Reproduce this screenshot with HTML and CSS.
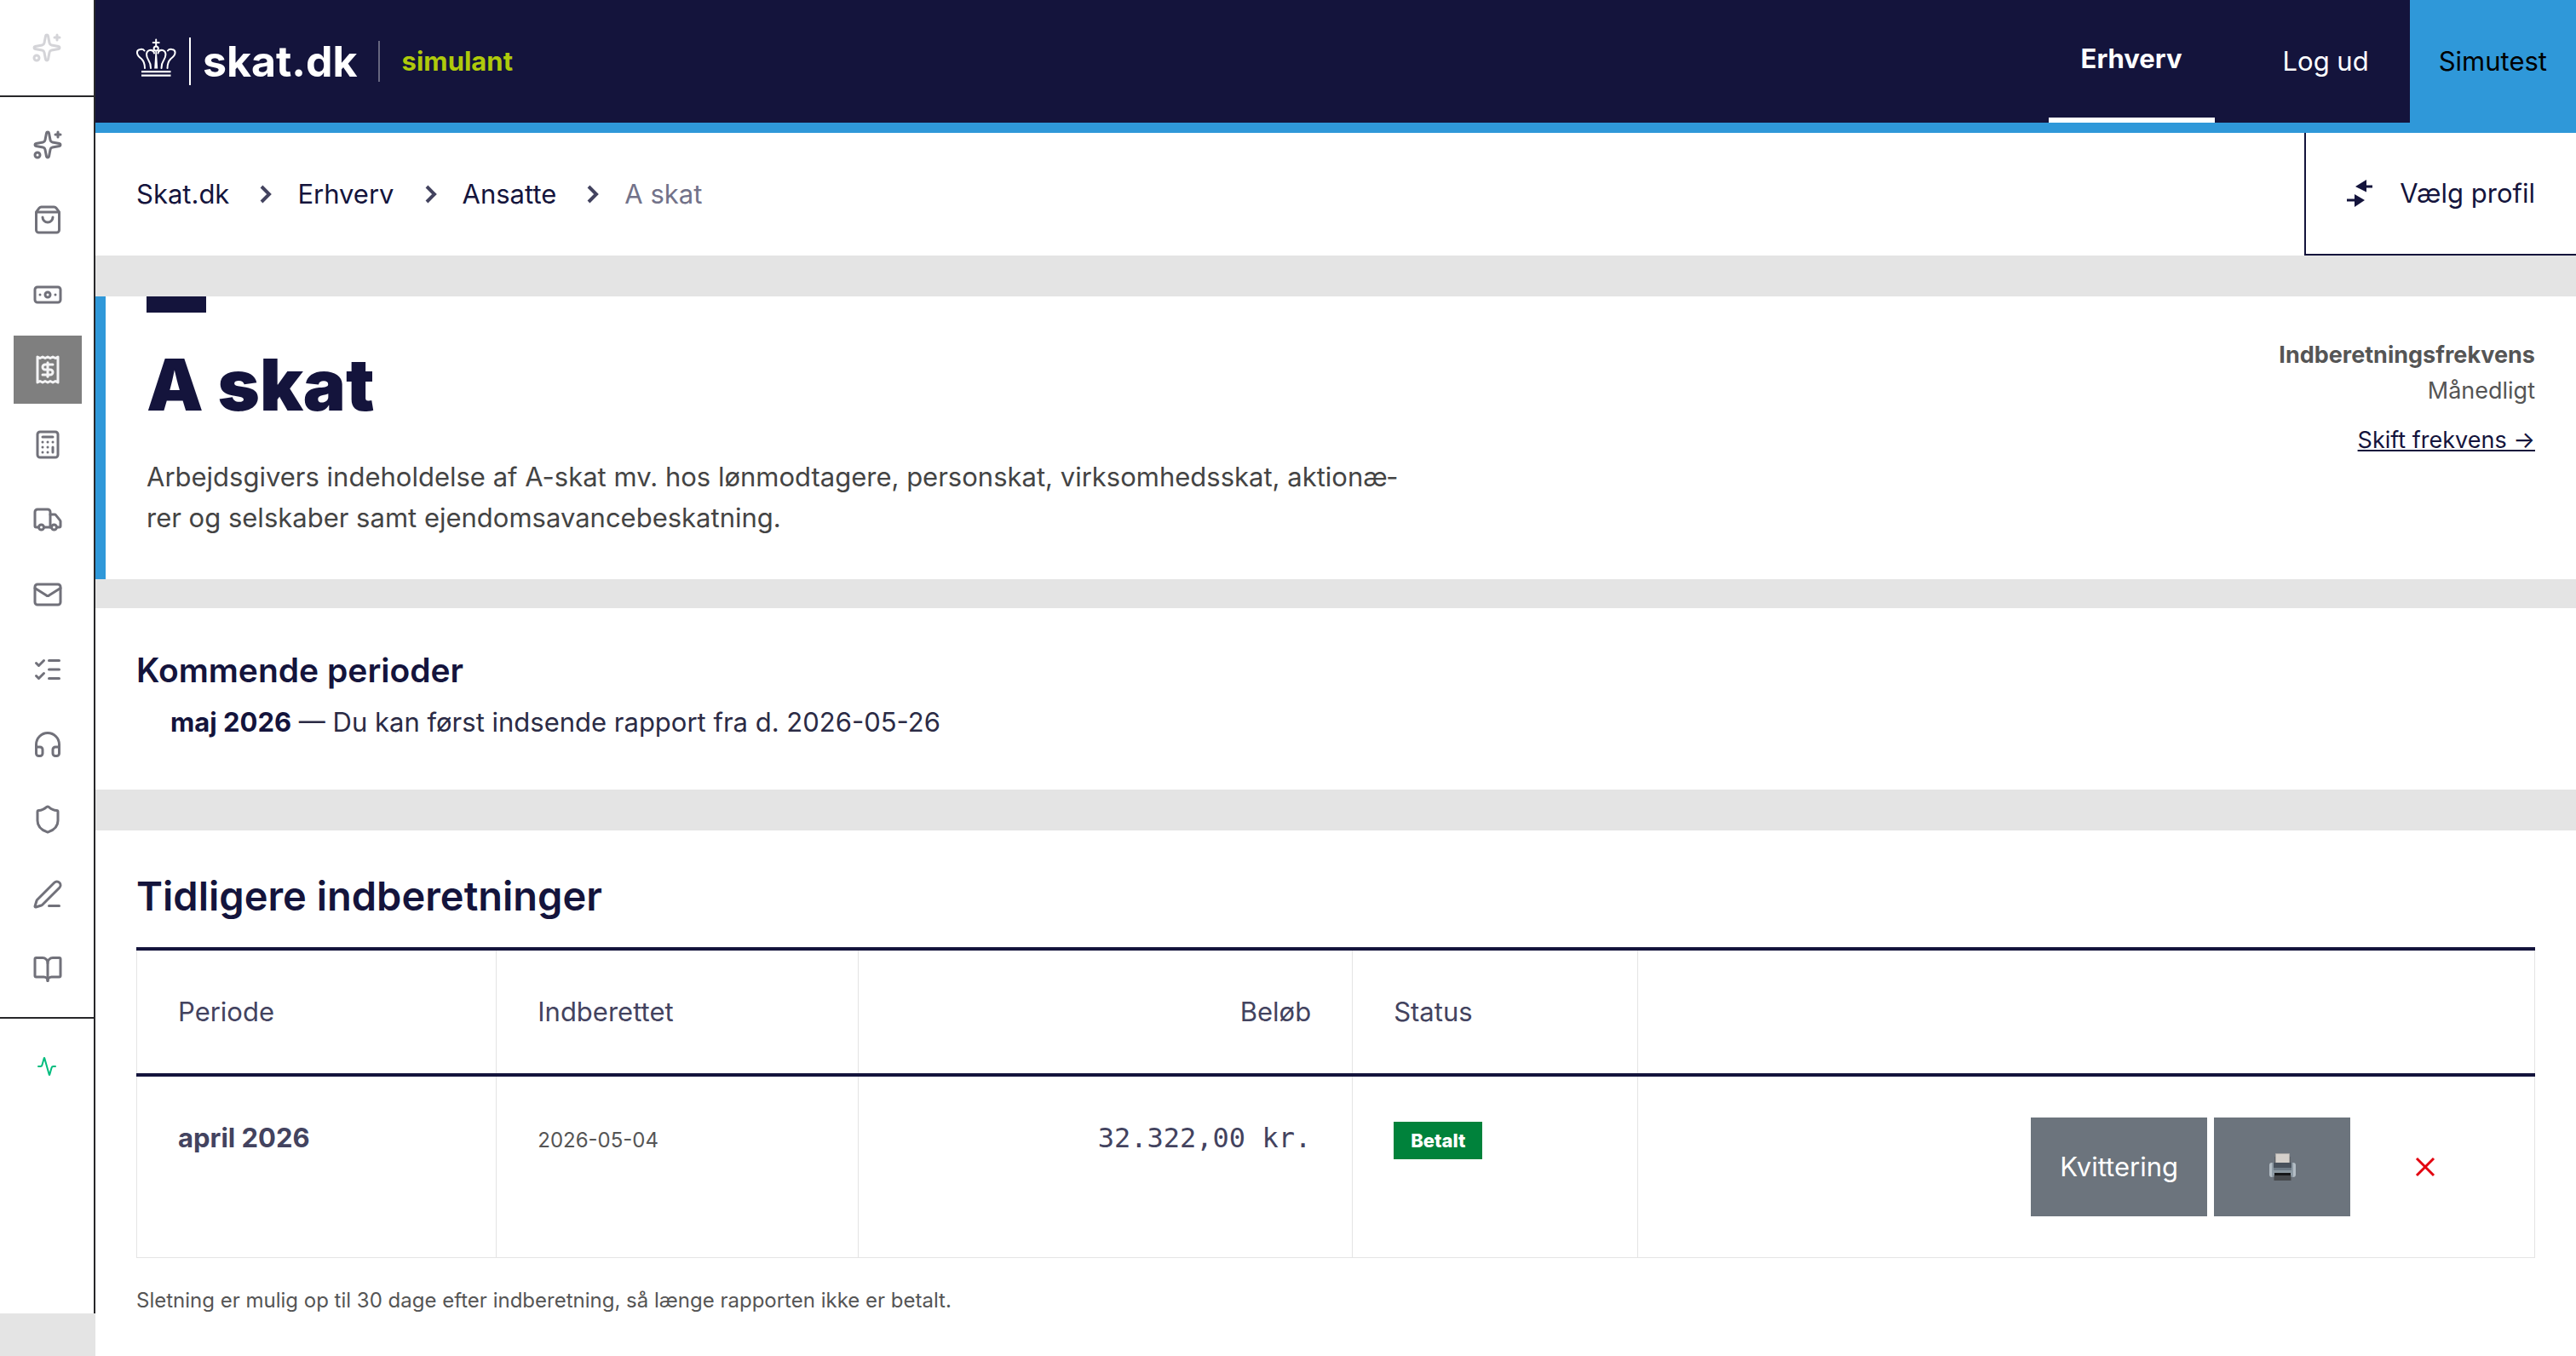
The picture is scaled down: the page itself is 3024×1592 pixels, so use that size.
FILE: index.html
```html
<!DOCTYPE html>
<html lang="da">
<head>
	<meta charset="utf-8">
	<title>A skat - skat.dk simulant</title>
	<meta name="viewport" content="width=device-width, initial-scale=1.0">
	<link rel="stylesheet" href="styles.css">
</head>
<body>
	<aside class="sidebar">
		<div class="sidebar-top">
			<svg class="icon" viewBox="0 0 24 24"><path d="M11.017 2.814a1 1 0 0 1 1.966 0l1.051 5.558a2 2 0 0 0 1.594 1.594l5.558 1.051a1 1 0 0 1 0 1.966l-5.558 1.051a2 2 0 0 0-1.594 1.594l-1.051 5.558a1 1 0 0 1-1.966 0l-1.051-5.558a2 2 0 0 0-1.594-1.594l-5.558-1.051a1 1 0 0 1 0-1.966l5.558-1.051a2 2 0 0 0 1.594-1.594z"/><path d="M20 2v4"/><path d="M22 4h-4"/><circle cx="4" cy="20" r="2"/></svg>
		</div>
		<nav class="sidebar-nav">
			<a href="#" aria-label="Assistent"><svg class="icon" viewBox="0 0 24 24"><path d="M11.017 2.814a1 1 0 0 1 1.966 0l1.051 5.558a2 2 0 0 0 1.594 1.594l5.558 1.051a1 1 0 0 1 0 1.966l-5.558 1.051a2 2 0 0 0-1.594 1.594l-1.051 5.558a1 1 0 0 1-1.966 0l-1.051-5.558a2 2 0 0 0-1.594-1.594l-5.558-1.051a1 1 0 0 1 0-1.966l5.558-1.051a2 2 0 0 0 1.594-1.594z"/><path d="M20 2v4"/><path d="M22 4h-4"/><circle cx="4" cy="20" r="2"/></svg></a>
			<a href="#" aria-label="Butik"><svg class="icon" viewBox="0 0 24 24"><path d="M16 10a4 4 0 0 1-8 0"/><path d="M3.103 6.034h17.794"/><path d="M3.4 5.467a2 2 0 0 0-.4 1.2V20a2 2 0 0 0 2 2h14a2 2 0 0 0 2-2V6.667a2 2 0 0 0-.4-1.2l-2-2.667A2 2 0 0 0 17 2H7a2 2 0 0 0-1.6.8z"/></svg></a>
			<a href="#" aria-label="Bank"><svg class="icon" viewBox="0 0 24 24"><rect width="20" height="12" x="2" y="6" rx="2"/><circle cx="12" cy="12" r="2"/><path d="M6 12h.01M18 12h.01"/></svg></a>
			<a href="#" aria-label="Skat" class="active"><svg class="icon" viewBox="0 0 24 24"><path d="M4 2v20l2-1 2 1 2-1 2 1 2-1 2 1 2-1 2 1V2l-2 1-2-1-2 1-2-1-2 1-2-1-2 1Z"/><path d="M16 8h-6a2 2 0 1 0 0 4h4a2 2 0 1 1 0 4H8"/><path d="M12 17.5v-11"/></svg></a>
			<a href="#" aria-label="Regnskab"><svg class="icon" viewBox="0 0 24 24"><rect width="16" height="20" x="4" y="2" rx="2"/><path d="M8 6h8M16 14v4M16 10h.01M12 10h.01M8 10h.01M12 14h.01M8 14h.01M12 18h.01M8 18h.01"/></svg></a>
			<a href="#" aria-label="Levering"><svg class="icon" viewBox="0 0 24 24"><path d="M14 18V6a2 2 0 0 0-2-2H4a2 2 0 0 0-2 2v11a1 1 0 0 0 1 1h2"/><path d="M15 18H9"/><path d="M19 18h2a1 1 0 0 0 1-1v-3.65a1 1 0 0 0-.22-.624l-3.48-4.35A1 1 0 0 0 17.52 8H14"/><circle cx="17" cy="18" r="2"/><circle cx="7" cy="18" r="2"/></svg></a>
			<a href="#" aria-label="Post"><svg class="icon" viewBox="0 0 24 24"><path d="m22 7-8.991 5.727a2 2 0 0 1-2.009 0L2 7"/><rect x="2" y="4" width="20" height="16" rx="2"/></svg></a>
			<a href="#" aria-label="Opgaver"><svg class="icon" viewBox="0 0 24 24"><path d="m3 17 2 2 4-4"/><path d="m3 7 2 2 4-4"/><path d="M13 5h8M13 12h8M13 19h8"/></svg></a>
			<a href="#" aria-label="Support"><svg class="icon" viewBox="0 0 24 24"><path d="M3 14h3a2 2 0 0 1 2 2v3a2 2 0 0 1-2 2H5a2 2 0 0 1-2-2v-7a9 9 0 0 1 18 0v7a2 2 0 0 1-2 2h-1a2 2 0 0 1-2-2v-3a2 2 0 0 1 2-2h3"/></svg></a>
			<a href="#" aria-label="Sikkerhed"><svg class="icon" viewBox="0 0 24 24"><path d="M20 13c0 5-3.5 7.5-7.66 8.95a1 1 0 0 1-.67-.01C7.5 20.5 4 18 4 13V6a1 1 0 0 1 1-1c2 0 4.5-1.2 6.24-2.72a1.17 1.17 0 0 1 1.52 0C14.51 3.81 17 5 19 5a1 1 0 0 1 1 1z"/></svg></a>
			<a href="#" aria-label="Noter"><svg class="icon" viewBox="0 0 24 24"><path d="M13 21h8"/><path d="M21.174 6.812a1 1 0 0 0-3.986-3.987L3.842 16.174a2 2 0 0 0-.5.83l-1.321 4.352a.5.5 0 0 0 .623.622l4.353-1.32a2 2 0 0 0 .83-.497z"/></svg></a>
			<a href="#" aria-label="Vejledning"><svg class="icon" viewBox="0 0 24 24"><path d="M12 7v14"/><path d="M3 18a1 1 0 0 1-1-1V4a1 1 0 0 1 1-1h5a4 4 0 0 1 4 4 4 4 0 0 1 4-4h5a1 1 0 0 1 1 1v13a1 1 0 0 1-1 1h-6a3 3 0 0 0-3 3 3 3 0 0 0-3-3z"/></svg></a>
		</nav>
		<div class="sidebar-status">
			<svg class="icon small" viewBox="0 0 24 24"><path d="M22 12h-2.48a2 2 0 0 0-1.93 1.46l-2.35 8.36a.25.25 0 0 1-.48 0L9.24 2.18a.25.25 0 0 0-.48 0l-2.35 8.36A2 2 0 0 1 4.49 12H2"/></svg>
		</div>
	</aside>

	<div class="page">
		<header class="header">
			<a href="#" class="logo">
				<svg class="crown" viewBox="0 0 50 46">
					<path class="line" d="M23.200 1.500v7M19.700 5h7M10 35c0-5-1-8-4-11-7-5-6-10.500-1.500-11 2-.5 4 0 5 1.500M36.500 35c0-5 1-8 4-11 7-5 6-10.500 1.500-11-2-.5-4 0-5 1.500M17 35c0-5-1-7-3-10-3-5-2.500-10 1.500-11 3-.5 5 1 5.500 3.500M29.500 35c0-5 1-7 3-10 3-5 2.500-10-1.500-11-3-.5-5 1-5.500 3.500"/>
					<circle class="line" cx="23.200" cy="12" r="2.600"/>
					<path d="M22.500 15h1.400l1.300 20.500h-4zM6 38h34.500v2.200H6zM6 42.600h34.500v2.200H6z"/>
				</svg>
				<span class="logo-bar"></span>
				<span class="logo-text">skat.dk</span>
				<span class="logo-divider"></span>
				<span class="logo-sim">simulant</span>
			</a>
			<nav class="menu">
				<a href="#" class="tab">Erhverv</a>
				<a href="#" class="logout">Log ud</a>
				<a href="#" class="user">Simutest</a>
			</nav>
		</header>

		<div class="subheader">
			<nav class="crumbs">
				<a href="#">Skat.dk</a>
				<svg class="chevron" viewBox="0 0 14 22"><path d="M2 2l9 9-9 9"/></svg>
				<a href="#">Erhverv</a>
				<svg class="chevron" viewBox="0 0 14 22"><path d="M2 2l9 9-9 9"/></svg>
				<a href="#">Ansatte</a>
				<svg class="chevron" viewBox="0 0 14 22"><path d="M2 2l9 9-9 9"/></svg>
				<span>A skat</span>
			</nav>
			<button class="profile">
				<svg viewBox="0 0 30 32"><path d="M30 6.500v3h-7v5L10 8l13-8v6.500zM0 22.500v3h9V32l12-8-12-7v5.500z"/></svg>
				Vælg profil
			</button>
		</div>

		<section class="hero">
			<div class="hero-text">
				<h1>A skat</h1>
				<p>Arbejdsgivers indeholdelse af A-skat mv. hos lønmodtagere, personskat, virksomhedsskat, aktionæ&shy;rer og selskaber samt ejendomsavancebeskatning.</p>
			</div>
			<div class="frequency">
				<strong>Indberetningsfrekvens</strong>
				<span>Månedligt</span>
				<a href="#">Skift frekvens →</a>
			</div>
		</section>

		<section class="upcoming">
			<h3>Kommende perioder</h3>
			<ul>
				<li><strong>maj 2026</strong> — Du kan først indsende rapport fra d. 2026-05-26</li>
			</ul>
		</section>

		<section class="reports">
			<h2>Tidligere indberetninger</h2>
			<table>
				<colgroup>
					<col class="col-period">
					<col class="col-date">
					<col class="col-amount">
					<col class="col-status">
					<col>
				</colgroup>
				<thead>
					<tr>
						<th>Periode</th>
						<th>Indberettet</th>
						<th class="right">Beløb</th>
						<th>Status</th>
						<th></th>
					</tr>
				</thead>
				<tbody>
					<tr>
						<td><strong>april 2026</strong></td>
						<td><span class="date">2026-05-04</span></td>
						<td class="right"><span class="amount">32.322,00 kr.</span></td>
						<td><span class="badge">Betalt</span></td>
						<td>
							<div class="actions">
								<button class="receipt">Kvittering</button>
								<button class="print" aria-label="Udskriv">
									<svg viewBox="0 0 31 32">
										<path fill="#5b6067" d="M6 4h19v9H6z"/>
										<path fill="#d5d0cb" stroke="#aaa8a6" d="M7.500.500h16v11h-16z"/>
										<rect fill="#b3bdc5" y="11" width="31" height="17" rx="3"/>
										<path fill="#8d9aa4" d="M3 11h25v17H3z"/>
										<path fill="#49525d" d="M5 11h21v6H5z"/>
										<path fill="#6e7b86" d="M5 17h21v3H5z"/>
										<path fill="#8a979f" d="M5 20h21v3H5z"/>
										<path fill="#151617" d="M6 23h19v4H6z"/>
										<path fill="#45484b" d="M5.500 26h20v6h-20z"/>
									</svg>
								</button>
								<button class="delete" aria-label="Slet">
									<svg viewBox="0 0 24 24"><path d="M2 2l20 20M22 2L2 22"/></svg>
								</button>
							</div>
						</td>
					</tr>
				</tbody>
			</table>
			<p class="note">Sletning er mulig op til 30 dage efter indberetning, så længe rapporten ikke er betalt.</p>
		</section>
	</div>
</body>
</html>
```
FILE: styles.css
```css
* {
	box-sizing: border-box;
}

body {
	margin: 0;
	display: flex;
	min-height: 100vh;
	background: #e4e4e4;
	color: #14143c;
	font-family: Inter, "Liberation Sans", sans-serif;
	font-size: 31px;
	line-height: 48px;
}

a {
	color: inherit;
	text-decoration: none;
}

h1, h2, h3, p, ul {
	margin: 0;
	padding: 0;
}

button {
	border: none;
	background: none;
	color: inherit;
	font: inherit;
	cursor: pointer;
}

/* Sidebar */
.sidebar {
	flex: none;
	width: 112px;
	height: calc(100vh - 50px);
	background: #fff;
	border-right: 2px solid #27272a;
}

.sidebar-top {
	display: flex;
	align-items: center;
	justify-content: center;
	height: 114px;
	border-bottom: 2px solid #27272a;
	color: #d4d4d8;
}

.sidebar-nav {
	display: flex;
	flex-direction: column;
	gap: 8px;
	padding: 16px 14px 16px 16px;
	border-bottom: 2px solid #27272a;
	color: #71717a;
}

.sidebar-nav a {
	display: flex;
	align-items: center;
	justify-content: center;
	height: 80px;
}

.sidebar-nav .active {
	background: #7f7f7f;
	color: #f4f4f5;
}

.sidebar-status {
	display: flex;
	justify-content: center;
	padding-top: 44px;
	color: #00bc7d;
}

.icon {
	width: 36px;
	height: 36px;
	fill: none;
	stroke: currentColor;
	stroke-width: 2;
	stroke-linecap: round;
	stroke-linejoin: round;
}

.icon.small {
	width: 24px;
	height: 24px;
}

/* Header */
.page {
	flex: 1;
	min-width: 0;
	display: flex;
	flex-direction: column;
}

.header {
	display: flex;
	justify-content: space-between;
	height: 156px;
	padding-left: 48px;
	background: #14143c;
	border-bottom: 12px solid #2f98d9;
	color: #fff;
}

.logo {
	display: flex;
	align-items: center;
}

.crown {
	width: 50px;
	height: 46px;
	margin-top: -8px;
	fill: #fff;
}

.crown .line {
	fill: none;
	stroke: #fff;
	stroke-width: 2;
	stroke-linecap: round;
}

.logo-bar {
	width: 2px;
	height: 56px;
	margin: 0 14px 0 12px;
	background: #fff;
}

.logo-text {
	font-size: 50px;
	font-weight: 700;
}

.logo-divider {
	width: 2px;
	height: 48px;
	margin: 0 26px 0 24px;
	background: #66667f;
}

.logo-sim {
	color: #afca0b;
	font-weight: 700;
}

.menu {
	display: flex;
	align-items: stretch;
}

.menu a {
	display: flex;
	align-items: center;
}

.menu .tab {
	padding: 0 38px;
	border-bottom: 6px solid #fff;
	font-weight: 700;
}

.menu .logout {
	padding: 0 48px 0 80px;
}

.menu .user {
	padding: 0 34px;
	background: #2f98d9;
	color: #000;
}

.subheader {
	display: flex;
	justify-content: space-between;
	height: 144px;
	background: #fff;
}

.crumbs {
	display: flex;
	align-items: center;
	padding-left: 48px;
}

.crumbs span {
	color: #727289;
}

.chevron {
	width: 14px;
	height: 22px;
	margin: 0 30px 0 36px;
	fill: none;
	stroke: #43435f;
	stroke-width: 4;
}

.profile {
	display: flex;
	align-items: center;
	gap: 32px;
	padding: 0 48px;
	border-left: 2px solid #14143c;
	border-bottom: 2px solid #14143c;
}

.profile svg {
	width: 30px;
	height: 32px;
	fill: #14143c;
}

/* Hero */
.hero {
	display: flex;
	justify-content: space-between;
	margin-top: 48px;
	padding: 0 48px 48px;
	background: #fff;
	border-left: 12px solid #2f98d9;
}

.hero-text {
	max-width: 1488px;
}

.hero-text::before {
	content: "";
	display: block;
	width: 70px;
	height: 19px;
	background: #14143c;
}

.hero h1 {
	margin: 35px 0 34px;
	font-size: 84px;
	font-weight: 900;
	line-height: 100px;
}

.hero p {
	color: #444;
}

.frequency {
	display: flex;
	flex-direction: column;
	align-items: flex-end;
	padding-top: 48px;
	color: #555;
	font-size: 27px;
	line-height: 42px;
}

.frequency a {
	margin-top: 16px;
	color: #14143c;
	text-decoration: underline;
}

/* Periods */
.upcoming {
	margin-top: 34px;
	padding: 48px 48px 55px;
	background: #fff;
}

.upcoming h3 {
	font-size: 39px;
	font-weight: 600;
	line-height: 50px;
}

.upcoming ul {
	margin-top: 12px;
	padding-left: 40px;
	list-style: none;
}

.upcoming li {
	color: #2b2b45;
}

.upcoming strong {
	color: #14143c;
}

.reports {
	flex: 1;
	margin-top: 48px;
	padding: 48px;
	background: #fff;
}

.reports h2 {
	margin-bottom: 32px;
	font-size: 47px;
	font-weight: 600;
	line-height: 57px;
}

table {
	width: 100%;
	table-layout: fixed;
	border-collapse: collapse;
	color: #43435f;
}

.col-period {
	width: 15%;
}

.col-date {
	width: 15.1%;
}

.col-amount {
	width: 20.6%;
}

.col-status {
	width: 11.9%;
}

th, td {
	padding: 48px;
	border: 1px solid #e4e4e4;
	text-align: left;
	vertical-align: top;
}

th {
	border-top: 4px solid #14143c;
	border-bottom: 4px solid #14143c;
	font-weight: 400;
}

.right {
	text-align: right;
}

.date {
	color: #555;
	font-size: 24px;
}

.amount {
	font-family: "DejaVu Sans Mono", monospace;
	font-size: 32px;
	line-height: 32px;
}

.badge {
	display: inline-block;
	padding: 0 20px;
	background: #00823b;
	color: #fff;
	font-size: 22px;
	font-weight: 800;
	line-height: 44px;
}

.actions {
	display: flex;
	justify-content: flex-end;
	gap: 8px;
}

.actions button {
	display: flex;
	align-items: center;
	justify-content: center;
	min-width: 160px;
	height: 116px;
	padding: 0 34px;
}

.actions .receipt, .actions .print {
	background: #6c747d;
	color: #fff;
}

.print svg {
	width: 31px;
	height: 32px;
}

.delete svg {
	width: 24px;
	height: 24px;
	stroke: #e3000f;
	stroke-width: 3;
}

.note {
	margin-top: 30px;
	color: #555;
	font-size: 24px;
	line-height: 40px;
}
```
